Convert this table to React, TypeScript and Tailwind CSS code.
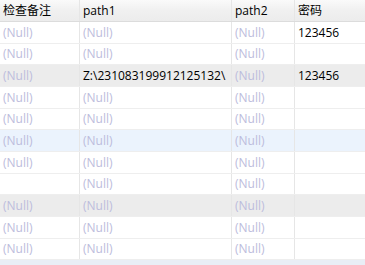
import React from "react";

type Row = { c: (string | null | undefined)[]; bg: string; h: string };

const N = null;
const E = undefined;

const rows: Row[] = [
  { c: [N, N, N, "123456"], bg: "bg-white", h: "h-[22px]" },
  { c: [N, N, N, E], bg: "bg-white", h: "h-[21px]" },
  { c: [N, "Z:\\231083199912125132\\", N, "123456"], bg: "bg-[#ececec]", h: "h-[22px]" },
  { c: [N, N, N, E], bg: "bg-white", h: "h-[22px]" },
  { c: [N, N, N, E], bg: "bg-white", h: "h-[21px]" },
  { c: [N, N, N, E], bg: "bg-[#ebf3fd]", h: "h-[22px]" },
  { c: [N, N, N, E], bg: "bg-white", h: "h-[22px]" },
  { c: [E, N, N, E], bg: "bg-white", h: "h-[21px]" },
  { c: [N, N, N, E], bg: "bg-[#ececec]", h: "h-[22px]" },
  { c: [N, N, N, E], bg: "bg-white", h: "h-[22px]" },
  { c: [N, N, N, E], bg: "bg-white", h: "h-[21px]" },
];

const widths = ["w-[80px]", "w-[152px]", "w-[63px]", "flex-1"];

function Cell({ v, w, last }: { v: string | null | undefined; w: string; last: boolean }) {
  return (
    <div
      className={`${w} h-full flex items-center pl-[3px] overflow-hidden whitespace-nowrap ${last ? "" : "border-r border-[#e6e6e6]"}`}
    >
      {v === null ? (
        <span className="text-[#bcbcdc]">(Null)</span>
      ) : v === undefined ? null : (
        <span className="text-black">{v}</span>
      )}
    </div>
  );
}

export default function App() {
  const headers = ["检查备注", "path1", "path2", "密码"];
  return (
    <div
      className="w-[365px] h-[265px] overflow-hidden bg-[#e9eef6] flex flex-col text-[12px]"
      style={{ fontFamily: '"Open Sans", "Noto Sans CJK SC", sans-serif' }}
    >
      <div className="flex h-[22px] shrink-0 border-b border-[#dcdcdc] bg-gradient-to-b from-[#fafafa] via-[#f0f0f0] to-[#ececec]">
        {headers.map((h, i) => (
          <div
            key={i}
            className={`${widths[i]} h-full flex items-center pl-[3px] text-black ${i < 3 ? "border-r border-[#e6e6e6]" : ""}`}
          >
            {h}
          </div>
        ))}
      </div>
      {rows.map((r, ri) => (
        <div key={ri} className={`flex shrink-0 ${r.h} ${r.bg} border-b border-[#eeeeee]`}>
          {r.c.map((v, ci) => (
            <Cell key={ci} v={v} w={widths[ci]} last={ci === 3} />
          ))}
        </div>
      ))}
    </div>
  );
}
